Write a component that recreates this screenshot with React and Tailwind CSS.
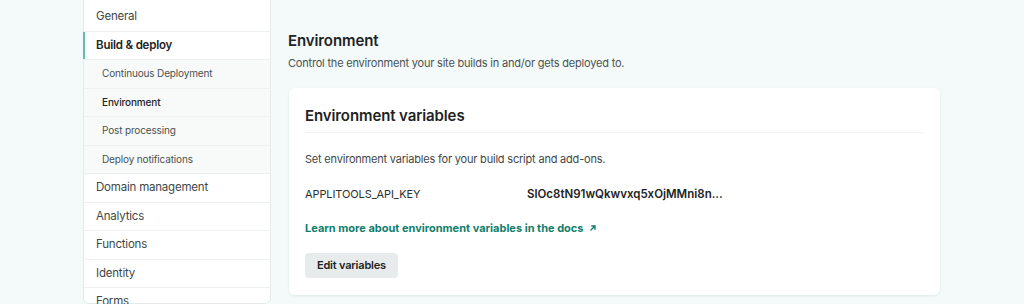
import React from "react";

const font = { fontFamily: "Inter, 'Noto Sans', 'Liberation Sans', sans-serif" };

const navItems = [
  { label: "General" },
  { label: "Build & deploy", active: true },
  { label: "Continuous Deployment", sub: true },
  { label: "Environment", sub: true, current: true },
  { label: "Post processing", sub: true },
  { label: "Deploy notifications", sub: true },
  { label: "Domain management" },
  { label: "Analytics" },
  { label: "Functions" },
  { label: "Identity" },
  { label: "Forms" },
];

function Sidebar() {
  return (
    <nav className="w-[188px] shrink-0 bg-white border border-[#e6ebea] rounded-b-md -mt-px">
      {navItems.map((item, i) => (
        <div
          key={item.label}
          className={
            "relative flex items-center " +
            (i === 0 ? "h-[30.5px] pt-[2px] " : "h-[28.5px] border-t border-[#eef1f1] ") +
            (item.sub
              ? "bg-[#f8f9f9] pl-[18px] text-[10px] tracking-[-0.15px] "
              : "pl-3 text-[11.5px] tracking-[-0.2px] ") +
            (item.active
              ? "font-semibold text-[#1e2324] "
              : item.current
              ? "font-medium text-[#1e2324] "
              : item.sub
              ? "text-[#4a5252] "
              : "text-[#3f4747] ")
          }
        >
          {item.active && (
            <span className="absolute -left-px top-0 bottom-0 w-[2px] bg-[#5fbfae]" />
          )}
          {item.label}
        </div>
      ))}
    </nav>
  );
}

function ArrowUpRight() {
  return (
    <svg width="8" height="8" viewBox="0 0 10 10" className="inline-block ml-[5px] -mt-[2px]" fill="none" stroke="currentColor" strokeWidth="1.7" strokeLinecap="round">
      <path d="M2.5 7.5 L7.5 2.5 M3.5 2.5 H7.5 V6.5" />
    </svg>
  );
}

export default function App() {
  return (
    <div className="w-[1024px] h-[304px] overflow-hidden bg-[#f3faf9] flex" style={font}>
      <div className="pl-[83px] flex">
        <Sidebar />
      </div>
      <main className="ml-[17px] w-[652px] pt-[31px]">
        <h1 className="text-[15px] tracking-[-0.1px] font-semibold text-[#1e2324] leading-5">Environment</h1>
        <p className="mt-[4px] text-[11px] tracking-[-0.2px] text-[#4a5252] leading-4">
          Control the environment your site builds in and/or gets deployed to.
        </p>
        <section className="mt-[17px] ml-px bg-white rounded-md shadow-[0_1px_3px_rgba(0,40,40,0.08)] px-4 pt-[18px] pb-[17px]">
          <h2 className="text-[15px] tracking-[-0.1px] font-semibold text-[#1e2324] leading-5 pb-[6px] border-b border-[#eef2f1]">
            Environment variables
          </h2>
          <p className="mt-[18px] text-[11px] tracking-[-0.2px] text-[#3f4747] leading-4">
            Set environment variables for your build script and add-ons.
          </p>
          <div className="mt-[19px] flex leading-4">
            <span className="w-[222px] text-[11px] tracking-[-0.1px] text-[#2b3131]">APPLITOOLS_API_KEY</span>
            <span className="text-[11.5px] font-semibold text-[#1e2324]">SlOc8tN91wQkwvxq5xOjMMni8n...</span>
          </div>
          <a className="mt-[18px] block text-[11px] font-bold text-[#107e6d] leading-4">
            Learn more about environment variables in the docs
            <ArrowUpRight />
          </a>
          <button className="mt-[17px] h-[25px] px-3 rounded-[4px] bg-[#e8ebeb] text-[11px] tracking-[-0.2px] font-semibold text-[#1e2324]">
            Edit variables
          </button>
        </section>
      </main>
    </div>
  );
}
